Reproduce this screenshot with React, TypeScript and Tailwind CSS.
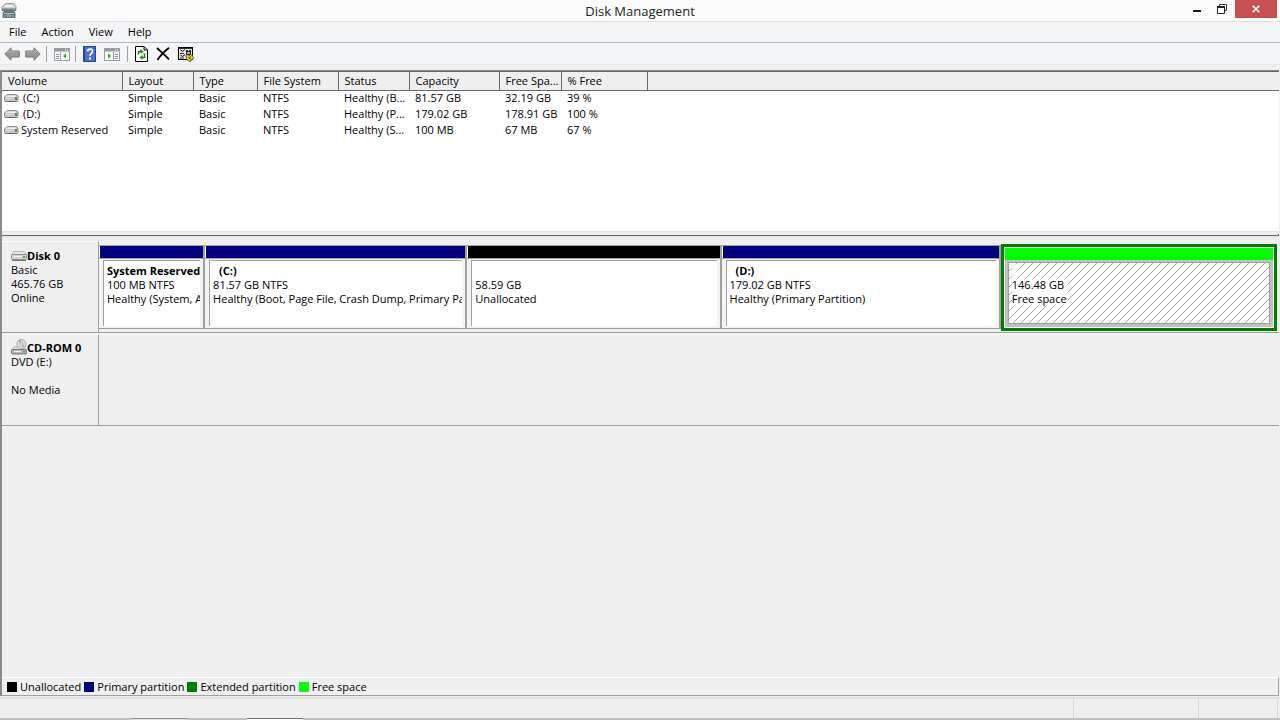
import { useState } from "react"

const columns = [
  { name: "Volume", width: "w-[120px]" },
  { name: "Layout", width: "w-[71px]" },
  { name: "Type", width: "w-[64px]" },
  { name: "File System", width: "w-[81px]" },
  { name: "Status", width: "w-[71px]" },
  { name: "Capacity", width: "w-[90px]" },
  { name: "Free Spa...", width: "w-[62px]" },
  { name: "% Free", width: "w-[86px]" },
]

const volumes = [
  ["(C:)", "Simple", "Basic", "NTFS", "Healthy (B...", "81.57 GB", "32.19 GB", "39 %"],
  ["(D:)", "Simple", "Basic", "NTFS", "Healthy (P...", "179.02 GB", "178.91 GB", "100 %"],
  ["System Reserved", "Simple", "Basic", "NTFS", "Healthy (S...", "100 MB", "67 MB", "67 %"],
]

const partitions = [
  { title: "System Reserved", size: "100 MB NTFS", status: "Healthy (System, A", share: 104, bar: "bg-[#000080]" },
  { title: "(C:)", size: "81.57 GB NTFS", status: "Healthy (Boot, Page File, Crash Dump, Primary Pa", share: 260, bar: "bg-[#000080]" },
  { title: "", size: "58.59 GB", status: "Unallocated", share: 252, bar: "bg-black" },
  { title: "(D:)", size: "179.02 GB NTFS", status: "Healthy (Primary Partition)", share: 277, bar: "bg-[#000080]" },
]

const legend = [
  { label: "Unallocated", color: "bg-black" },
  { label: "Primary partition", color: "bg-[#000080]" },
  { label: "Extended partition", color: "bg-[#008000]" },
  { label: "Free space", color: "bg-[#00ff00]" },
]

function DriveIcon() {
  return (
    <svg width="15" height="8" viewBox="0 0 15 8" className="shrink-0" aria-hidden="true">
      <path d="M3 .5h9l2 1.500v4.500l-1 1H2l-1.500-1V3z" fill="#c4c4c6" stroke="#8a8a8d" strokeLinejoin="round" />
      <path d="M3 1.500h8.500l1 1.500H2z" fill="#f0f0f0" />
      <path d="M1.500 4.500H10" stroke="#dcdcde" />
      <path d="M1.500 7.500h12" stroke="#6c6c70" />
      <rect x="11" y="3" width="2" height="3" fill="#3f9a3f" />
    </svg>
  )
}

function DiskIcon() {
  return (
    <svg width="16" height="10" viewBox="0 0 16 10" className="shrink-0" aria-hidden="true">
      <path d="M2.500.5h11l2 4H.5z" fill="#e6e6e6" stroke="#b4b4b4" />
      <rect x=".5" y="3.500" width="15" height="5" rx="1" fill="#d2d2d2" stroke="#8c8c8c" />
      <path d="M2 5.500h9" stroke="#f3f3f3" />
      <rect x="12" y="5" width="2" height="2" fill="#38b438" />
      <path d="M1 9.500h14" stroke="#777" />
    </svg>
  )
}

function CdIcon() {
  return (
    <svg width="16" height="16" viewBox="0 0 16 16" className="shrink-0" aria-hidden="true">
      <path d="M3 8h10l2.500 3H.5z" fill="#e5e5e5" stroke="#a0a0a0" strokeWidth=".8" />
      <circle cx="10.500" cy="5" r="4.500" fill="#dcdce0" stroke="#999" strokeWidth=".8" />
      <path d="M10.500 5 7.500 2a4 4 0 0 1 2-1.200z" fill="#6fc46f" />
      <path d="m10.500 5 3.500 2a4 4 0 0 1-2 1.800z" fill="#b9a5d6" />
      <circle cx="10.500" cy="5" r="1.300" fill="#fff" stroke="#888" strokeWidth=".6" />
      <rect x=".5" y="10.500" width="15" height="4.500" rx="1" fill="#b5b5b5" stroke="#777" />
      <path d="M3 12.500h7" stroke="#eee" />
      <rect x="12" y="12" width="2" height="1.500" fill="#38b438" />
    </svg>
  )
}

function AppIcon() {
  return (
    <svg width="16" height="16" viewBox="0 0 16 16" aria-hidden="true">
      <path d="M3.500 1.500 5 .5h8l2 3v4H1V4z" fill="#d0d0d0" stroke="#888" strokeWidth=".8" />
      <path d="M3.500 3h9" stroke="#f6f6f6" strokeWidth="1.500" />
      <path d="M1 5.500h14v2.500H1z" fill="#747b7e" />
      <rect x="12" y="6" width="2" height="1" fill="#55d455" />
      <path d="M3 8.500h10l1 1.500v4.500H2V10z" fill="#5d7076" stroke="#55656b" strokeWidth=".8" />
      <path d="M3 10.500h10M3 13h2.500M10.500 13H13" stroke="#b4c2c7" />
      <path d="M6 11.500h4V14H6z" fill="#8fa3aa" />
    </svg>
  )
}

function ArrowIcon({ back = false }: { back?: boolean }) {
  return (
    <svg width="16" height="14" viewBox="0 0 16 14" aria-hidden="true">
      <path
        d={back ? "M.8 7 7 .8V4h8.200v6H7v3.200z" : "M15.200 7 9 .8V4H.8v6H9v3.200z"}
        fill="#989898"
        stroke="#777"
        strokeLinejoin="round"
      />
      <path d={back ? "M2.500 6.500 6 3v2h8" : "M2 5h8V3l3.500 3.500"} fill="none" stroke="#b8b8b8" strokeWidth=".8" />
    </svg>
  )
}

function PaneIcon({ right = false }: { right?: boolean }) {
  return (
    <svg width="16" height="13" viewBox="0 0 16 13" aria-hidden="true">
      <rect x=".5" y=".5" width="15" height="12" fill="#f7f7f7" stroke="#9a9fa6" />
      <path d="M1 1h14v2H1z" fill="#8f98a3" />
      <path d="M11 2h1M13 2h1" stroke="#fff" />
      <path d="M1 3.500h14" stroke="#c4cad2" />
      <path d={right ? "M9.500 4v8" : "M6.500 4v8"} stroke="#9a9fa6" />
      <path d={right ? "M11 6.500h3M11 8.500h3M11 10.500h3" : "M2 6.500h3M2 8.500h3M2 10.500h3"} stroke="#8792a5" />
      <path d={right ? "M4 5.500v5L7 8z" : "M12 5.500v5L9 8z"} fill="#35a51f" />
    </svg>
  )
}

function HelpIcon() {
  return (
    <svg width="13" height="16" viewBox="0 0 13 16" aria-hidden="true">
      <rect x=".5" y=".5" width="12" height="15" fill="#4a72d6" stroke="#2b4499" />
      <path d="M1.500 1v14" stroke="#26439f" />
      <path d="M4.500 5.500C4.500 2.300 9.500 2.300 9.500 5.300c0 2-2.500 2.100-2.500 4.700" fill="none" stroke="#fff" strokeWidth="1.700" />
      <rect x="6" y="11.500" width="2" height="2" fill="#fff" />
    </svg>
  )
}

function RefreshIcon() {
  return (
    <svg width="13" height="16" viewBox="0 0 13 16" aria-hidden="true">
      <path d="M.5.5h8.500l3.500 3.500v11.500H.5z" fill="#fff" stroke="#000" />
      <path d="M9 .5V4h3.500" fill="none" stroke="#000" />
      <path d="M3.500 8.500V5.500H6M9.500 7.500v4H7" fill="none" stroke="#1c8a1c" strokeWidth="1.600" />
      <path d="M5.500 3v5L8.500 5.500zM7.500 9v5L4.500 11.500z" fill="#1c8a1c" />
    </svg>
  )
}

function DeleteIcon() {
  return (
    <svg width="14" height="14" viewBox="0 0 14 14" aria-hidden="true">
      <path d="M1 1c3 3 8 7 12 11.500" stroke="#000" strokeWidth="1.800" fill="none" />
      <path d="M13 .8C9 4 4 9 1.500 13" stroke="#000" strokeWidth="1.800" fill="none" />
    </svg>
  )
}

function PropertiesIcon() {
  return (
    <svg width="16" height="15" viewBox="0 0 16 15" aria-hidden="true">
      <rect x=".5" y=".5" width="14" height="12" fill="#e6e6e6" stroke="#000" />
      <path d="M1 1.500h13M8 3.500h2M11 3.500h2M2 6.500h4M2 11h4" stroke="#333" />
      <path d="m2.500 3 2 1.500L7 2.500M2.500 8l2 1.500L7 7.500" stroke="#000" fill="none" />
      <rect x="8.500" y="4.500" width="4" height="3" fill="#aaa" stroke="#222" />
      <path d="m8 8 2-.5 1 1.500 1.500-1.500 2 1L15.500 11l-1 1.500-1.500.5-.5 1.500-2-.5-2-2.500z" fill="#e8dc1c" stroke="#4a4500" strokeWidth=".8" />
      <path d="m10 10 3.500 3M12.500 9l-1 3" stroke="#4a4500" strokeWidth=".8" />
    </svg>
  )
}

function ToolButton({ label, children }: { label: string; children: React.ReactNode }) {
  return (
    <button type="button" aria-label={label} className="flex h-5 items-center justify-center">
      {children}
    </button>
  )
}

function Divider() {
  return <div className="h-4 w-px bg-[#a0a0a0]" />
}

export default function App() {
  const [selected, setSelected] = useState("free")

  return (
    <div className="flex min-h-screen flex-col bg-[#efefef] font-['Open_Sans','Noto_Sans',sans-serif] text-[11px] leading-[14px] text-black">
      <header className="grid h-[22px] grid-cols-[1fr_auto_1fr] border-b border-[#dfdfe0] bg-[#fcfcfc]">
        <div className="flex items-center pl-px">
          <AppIcon />
        </div>
        <h1 className="text-[13px] leading-[22px] text-[#222]">Disk Management</h1>
        <div className="flex h-[18px] items-stretch justify-end pr-[3px]">
          <button type="button" aria-label="Minimize" className="flex w-6 items-end justify-center pb-[6px]">
            <span className="h-[2px] w-2 bg-[#1a1a1a]" />
          </button>
          <button type="button" aria-label="Restore" className="flex w-[26px] items-center justify-center">
            <svg width="10" height="10" viewBox="0 0 10 10" aria-hidden="true">
              <path d="M2.500 2.500v-2h7v6h-2" fill="none" stroke="#333" />
              <path d="M.5 3.500h7v6h-7z" fill="none" stroke="#222" />
              <path d="M0 3h8" stroke="#222" strokeWidth="2" />
            </svg>
          </button>
          <button type="button" aria-label="Close" className="flex w-[42px] items-center justify-center bg-[#c75050]">
            <svg width="8" height="8" viewBox="0 0 8 8" aria-hidden="true">
              <path d="m.7.7 6.600 6.600M7.300.7.700 7.300" stroke="#fff" strokeWidth="1.600" />
            </svg>
          </button>
        </div>
      </header>

      <nav className="flex h-[21px] items-center gap-[15px] border-b border-[#b4b5b7] bg-[#f4f5f7] pl-[9px]">
        {["File", "Action", "View", "Help"].map((item) => (
          <button key={item} type="button">
            {item}
          </button>
        ))}
      </nav>

      <div className="flex h-[22px] items-center gap-[7px] border-b border-[#e8e8ea] bg-[#f4f5f7] pt-px pl-1">
        <div className="flex items-center gap-[5px]">
          <ToolButton label="Back"><ArrowIcon back /></ToolButton>
          <ToolButton label="Forward"><ArrowIcon /></ToolButton>
          <Divider />
        </div>
        <div className="flex items-center gap-[5px]">
          <ToolButton label="Show/Hide Console Tree"><PaneIcon /></ToolButton>
          <Divider />
        </div>
        <div className="flex items-center gap-2">
          <ToolButton label="Help topics"><HelpIcon /></ToolButton>
          <ToolButton label="Show/Hide Action Pane"><PaneIcon right /></ToolButton>
        </div>
        <Divider />
        <div className="flex items-center gap-2">
          <ToolButton label="Refresh"><RefreshIcon /></ToolButton>
          <ToolButton label="Delete"><DeleteIcon /></ToolButton>
          <ToolButton label="Properties"><PropertiesIcon /></ToolButton>
        </div>
      </div>

      <main className="mt-[5px] mr-px flex flex-1 flex-col border-t border-l-2 border-[#8a8a8a]">
        <section className="h-[160px] border-t border-[#696969] bg-white">
          <table className="w-full table-fixed border-collapse text-left">
            <thead>
              <tr className="h-[18px] bg-[#efefef]">
                {columns.map((column) => (
                  <th key={column.name} scope="col" className={`${column.width} border-r border-b border-[#696969] p-0 pl-[6px] font-normal whitespace-nowrap`}>
                    {column.name}
                  </th>
                ))}
                <td className="border-b border-[#696969] p-0" />
              </tr>
            </thead>
            <tbody>
              {volumes.map((row) => (
                <tr key={row[0]} className="h-4">
                  {row.map((cell, index) => (
                    <td key={index} className={index === 0 ? "p-0 pl-[2px]" : "p-0 pl-[6px] whitespace-nowrap"}>
                      {index === 0 ? (
                        <span className="flex items-center gap-[2px] whitespace-nowrap">
                          <DriveIcon />
                          <span className={cell.startsWith("(") ? "pl-[2px]" : ""}>{cell}</span>
                        </span>
                      ) : (
                        cell
                      )}
                    </td>
                  ))}
                  <td />
                </tr>
              ))}
            </tbody>
          </table>
        </section>

        <div className="h-[7px] border-t border-[#e3e3e3] bg-[#efefef] pt-[2px]">
          <div className="h-[2px] border-r border-b border-[#696969]" />
          <div className="h-px bg-[#e3e3e3]" />
        </div>

        <section className="flex flex-1 flex-col">
          <div className="mt-[3px] flex h-[92px] border-b border-[#a0a0a0]">
            <div className="w-[97px] shrink-0 border-t border-r border-t-[#fafafa] border-r-[#a0a0a0] pt-[7px] pl-[9px]">
              <div className="flex items-center">
                <DiskIcon />
                <span className="font-bold">Disk 0</span>
              </div>
              <div>Basic</div>
              <div>465.76 GB</div>
              <div>Online</div>
            </div>
            <div className="flex min-w-0 flex-1 pt-[3px] pr-[2px] pb-px">
              {partitions.map((part) => (
                <button
                  key={part.size}
                  type="button"
                  onClick={() => setSelected(part.size)}
                  aria-pressed={selected === part.size}
                  className="mt-px mb-[2px] flex min-w-0 flex-col items-stretch border-t border-r-2 border-b border-[#a0a0a0] text-left"
                  style={{ flex: `${part.share} 1 0px` }}
                >
                  <span className={`h-3 border-l border-white ${part.bar}`} />
                  <span className="flex flex-1 flex-col border-t border-[#a0a0a0] bg-[#f4f4f4] p-[2px] pt-px pr-[3px] pl-[4px]">
                    <span className="flex-1 overflow-hidden border-t border-l border-[#a0a0a0] bg-white pt-[3px] pl-[3px]">
                      <span className="block overflow-hidden whitespace-nowrap">
                        <span className={`block h-[14px] font-bold ${part.title.startsWith("(") ? "pl-[6px]" : ""}`}>{part.title}</span>
                        <span className="block">{part.size}</span>
                        <span className="block">{part.status}</span>
                      </span>
                    </span>
                  </span>
                </button>
              ))}
              <button
                type="button"
                onClick={() => setSelected("free")}
                aria-pressed={selected === "free"}
                className="flex min-w-0 flex-col items-stretch border-3 border-[#008000] text-left"
                style={{ flex: "270 1 0px" }}
              >
                <span className="flex flex-1 flex-col border border-white">
                  <span className="h-3 bg-[#00ff00]" />
                  <span className="flex flex-1 flex-col bg-[#c0c0c0] p-[3px] pt-[2px]">
                    <span className="flex-1 border border-[#a0a0a0] bg-white bg-[linear-gradient(135deg,transparent_45%,#a0a0a0_46%,#a0a0a0_54%,transparent_55%)] bg-size-[8px_8px] pt-px pl-[3px] whitespace-nowrap">
                      <span className="block h-[14px] w-[6px] bg-white" />
                      <span className="block w-[56px] bg-white">146.48 GB</span>
                      <span className="block w-[56px] bg-white">Free space</span>
                    </span>
                  </span>
                </span>
              </button>
            </div>
          </div>

          <div className="mt-px flex h-[92px] border-b border-[#a0a0a0]">
            <div className="w-[97px] shrink-0 border-t border-r border-t-[#fafafa] border-r-[#a0a0a0] pt-1 pl-[9px]">
              <div className="flex items-end">
                <CdIcon />
                <span className="font-bold">CD-ROM 0</span>
              </div>
              <div>DVD (E:)</div>
              <div className="mt-[14px]">No Media</div>
            </div>
            <div className="flex-1 border-t border-[#fafafa]" />
          </div>
        </section>

        <footer className="flex h-[19px] items-center gap-[3px] border-t border-r border-b border-t-white border-r-[#a0a0a0] border-b-[#a0a0a0] pl-[5px]">
          {legend.map((item) => (
            <div key={item.label} className="flex items-center gap-[3px]">
              <span className={`size-[10px] ${item.color}`} />
              <span>{item.label}</span>
            </div>
          ))}
        </footer>
      </main>

      <div className="mt-px flex h-[23px] flex-col border-t-2 border-[#e0e0e0]">
        <div className="flex flex-1 justify-end pr-[2px]">
          <div className="w-[125px] border-l border-[#d6d6d6]" />
          <div className="w-[80px] border-r border-l border-[#d6d6d6]" />
        </div>
        <div className="flex h-[2px] bg-[#c0c0c0] pl-[131px]">
          <div className="w-[56px] border-t border-[#909090] bg-[#e0e0e0]" />
          <div className="ml-[60px] w-[56px] border-t border-[#707070] bg-white" />
        </div>
      </div>
    </div>
  )
}
